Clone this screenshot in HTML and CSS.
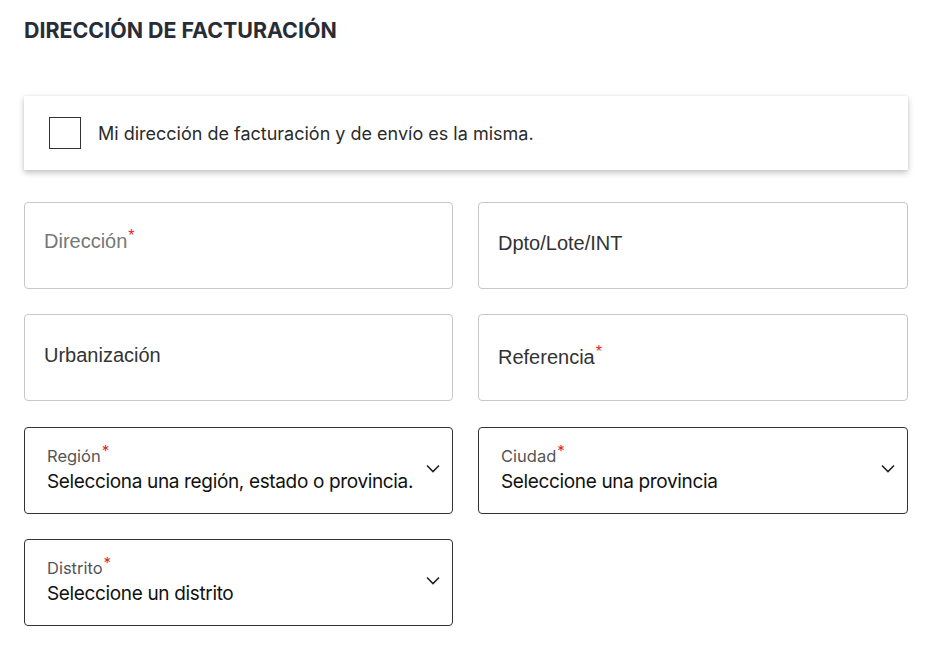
FILE: index.html
```html
<!DOCTYPE html>
<html lang="es">
<head>
<meta charset="utf-8">
<link rel="stylesheet" href="styles.css">
</head>
<body>
<div class="page">
  <h2 class="title">DIRECCIÓN DE FACTURACIÓN</h2>
  <label class="card">
    <span class="box"></span>
    <span class="card-text">Mi dirección de facturación y de envío es la misma.</span>
  </label>
  <div class="grid">
    <div class="field"><span class="ph ph-label">Dirección<span class="req">*</span></span></div>
    <div class="field"><span class="ph">Dpto/Lote/INT</span></div>
    <div class="field"><span class="ph">Urbanización</span></div>
    <div class="field"><span class="ph">Referencia<span class="req">*</span></span></div>
    <div class="select">
      <div class="sel-text">
        <span class="sel-label">Región<span class="req">*</span></span>
        <span class="sel-value">Selecciona una región, estado o provincia.</span>
      </div>
      <svg class="chev" width="14" height="9" viewBox="0 0 14 9"><path d="M1 1.5l6 6 6-6" fill="none" stroke="#222" stroke-width="1.6"/></svg>
    </div>
    <div class="select">
      <div class="sel-text">
        <span class="sel-label">Ciudad<span class="req">*</span></span>
        <span class="sel-value">Seleccione una provincia</span>
      </div>
      <svg class="chev" width="14" height="9" viewBox="0 0 14 9"><path d="M1 1.5l6 6 6-6" fill="none" stroke="#222" stroke-width="1.6"/></svg>
    </div>
    <div class="select">
      <div class="sel-text">
        <span class="sel-label">Distrito<span class="req">*</span></span>
        <span class="sel-value">Seleccione un distrito</span>
      </div>
      <svg class="chev" width="14" height="9" viewBox="0 0 14 9"><path d="M1 1.5l6 6 6-6" fill="none" stroke="#222" stroke-width="1.6"/></svg>
    </div>
  </div>
</div>
</body>
</html>
```
FILE: styles.css
```css
html, body { margin: 0; padding: 0; background: #fff; }
body { font-family: "Inter", "Liberation Sans", sans-serif; color: #1a1a1a; }
.page { width: 884px; padding: 18px 0 0 24px; }
.title {
  margin: 0;
  font-size: 21.4px;
  font-weight: 700;
  letter-spacing: 0;
  color: #272c35;
  line-height: 24px;
}
.card {
  margin-top: 54px;
  height: 74px;
  display: flex;
  align-items: center;
  gap: 17px;
  padding-left: 25px;
  background: #fff;
  box-shadow: 0 3px 6px rgba(0,0,0,0.22), 0 0 3px rgba(0,0,0,0.08);
  box-sizing: border-box;
}
.box {
  width: 32px; height: 32px;
  border: 1.5px solid #333;
  box-sizing: border-box;
}
.card-text { font-size: 18px; color: #2b2b2b; letter-spacing: 0; }
.grid {
  margin-top: 32px;
  display: grid;
  grid-template-columns: 429px 430px;
  column-gap: 25px;
  row-gap: 25.4px;
}
.field {
  height: 87px;
  border: 1px solid #c8c8c8;
  border-radius: 4px;
  box-sizing: border-box;
  display: flex;
  align-items: center;
  padding-left: 19px;
}
.ph { font-family: "Liberation Sans", Arial, sans-serif; font-size: 20px; color: #333; margin-top: -4px; }
.ph-label { color: #777; margin-top: -12px; }
.req { color: #e3262b; font-size: 16px; vertical-align: 7px; margin-left: 1px; }
.select {
  height: 87px;
  border: 1px solid #333;
  border-radius: 4px;
  box-sizing: border-box;
  display: flex;
  align-items: center;
  justify-content: space-between;
  padding: 0 12px 0 22px;
}
.sel-text { display: flex; flex-direction: column; margin-top: -5px; }
.sel-label { font-size: 16.5px; color: #555; line-height: 20px; letter-spacing: 0; margin-bottom: 3px; }
.sel-label .req { font-size: 15px; vertical-align: 6px; }
.sel-value { font-size: 19px; color: #111; line-height: 26px; letter-spacing: -0.35px; }
.chev { margin-top: -4px; }
```
